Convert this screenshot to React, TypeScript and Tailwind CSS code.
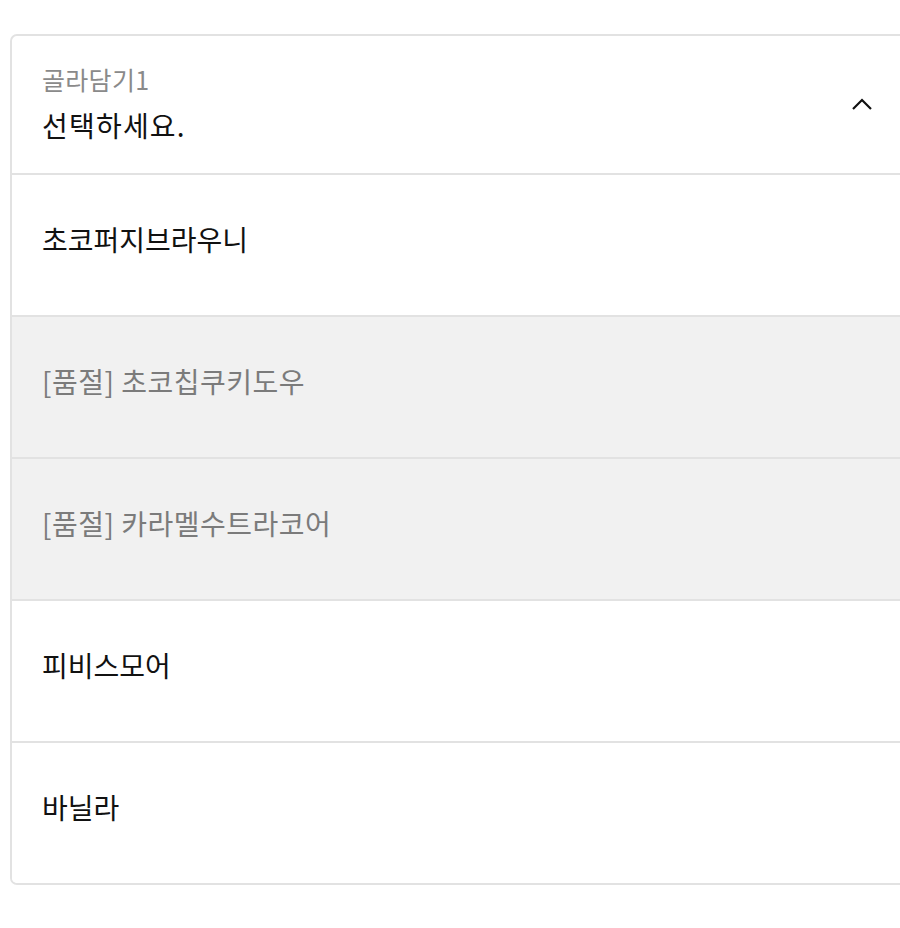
import * as React from "react";

const options = [
  { name: "초코퍼지브라우니", soldOut: false },
  { name: "초코칩쿠키도우", soldOut: true },
  { name: "카라멜수트라코어", soldOut: true },
  { name: "피비스모어", soldOut: false },
  { name: "바닐라", soldOut: false },
];

const font = {
  fontFamily: '"Noto Sans CJK KR", "Noto Sans", sans-serif',
};

export default function App() {
  return (
    <div className="w-[900px] h-[928px] overflow-hidden bg-white" style={font}>
      <div className="pt-[34px] pl-[10px]">
        <div className="w-[920px] rounded-[7px] border-2 border-[#e2e2e2] overflow-hidden">
          {/* header */}
          <div className="h-[137px] flex items-center justify-between pl-[30px] pr-[65px]">
            <div className="flex flex-col gap-[9px] pb-[3px]">
              <span className="text-[25px] leading-[34px] text-[#8a8a8a] tracking-[0.3px]">골라담기1</span>
              <span className="text-[28px] leading-[40px] text-[#111] tracking-[1.2px]">선택하세요.</span>
            </div>
            <svg width="22" height="14" viewBox="0 0 22 14" fill="none" className="mr-[-10px] mb-[1px]">
              <polyline points="2,12 11,3 20,12" stroke="#111" strokeWidth="2.2" />
            </svg>
          </div>
          {options.map((o) => (
            <div
              key={o.name}
              className={
                o.soldOut
                  ? "h-[142px] border-t-2 border-[#e2e2e2] bg-[#f1f1f1] flex items-center pl-[30px] pb-[12px]"
                  : "h-[142px] border-t-2 border-[#e2e2e2] bg-white flex items-center pl-[30px] pb-[12px]"
              }
            >
              <span
                className={
                  o.soldOut
                    ? "text-[28px] text-[#7b7b7b] tracking-[0.5px]"
                    : "text-[28px] text-[#111]"
                }
              >
                {o.soldOut ? `[품절] ${o.name}` : o.name}
              </span>
            </div>
          ))}
        </div>
      </div>
    </div>
  );
}
